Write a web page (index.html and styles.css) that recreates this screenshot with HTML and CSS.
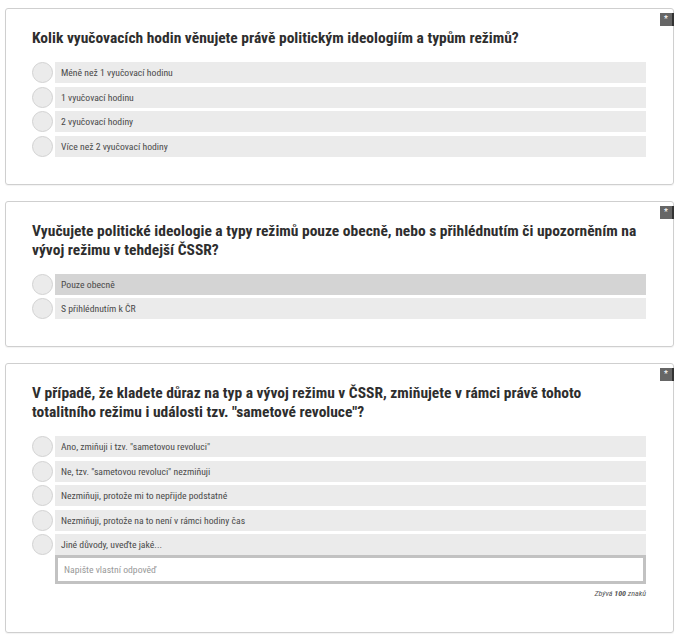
FILE: index.html
```html
<!DOCTYPE html>
<html lang="cs">
<head>
    <meta charset="UTF-8">
    <title>Dotazník</title>
    <link rel="stylesheet" href="styles.css">
</head>
<body>
    <div class="question">
        <span class="required">*</span>
        <h2>Kolik vyučovacích hodin věnujete právě politickým ideologiím a typům režimů?</h2>
        <div class="answers">
            <label class="answer"><span class="radio"></span><span class="answer-text">Méně než 1 vyučovací hodinu</span></label>
            <label class="answer"><span class="radio"></span><span class="answer-text">1 vyučovací hodinu</span></label>
            <label class="answer"><span class="radio"></span><span class="answer-text">2 vyučovací hodiny</span></label>
            <label class="answer"><span class="radio"></span><span class="answer-text">Více než 2 vyučovací hodiny</span></label>
        </div>
    </div>

    <div class="question">
        <span class="required">*</span>
        <h2>Vyučujete politické ideologie a typy režimů pouze obecně, nebo s přihlédnutím či upozorněním na vývoj režimu v tehdejší ČSSR?</h2>
        <div class="answers">
            <label class="answer hover"><span class="radio"></span><span class="answer-text">Pouze obecně</span></label>
            <label class="answer"><span class="radio"></span><span class="answer-text">S přihlédnutím k ČR</span></label>
        </div>
    </div>

    <div class="question">
        <span class="required">*</span>
        <h2>V případě, že kladete důraz na typ a vývoj režimu v ČSSR, zmiňujete v rámci právě tohoto totalitního režimu i události tzv. "sametové revoluce"?</h2>
        <div class="answers">
            <label class="answer"><span class="radio"></span><span class="answer-text">Ano, zmiňuji i tzv. "sametovou revoluci"</span></label>
            <label class="answer"><span class="radio"></span><span class="answer-text">Ne, tzv. "sametovou revoluci" nezmiňuji</span></label>
            <label class="answer"><span class="radio"></span><span class="answer-text">Nezmiňuji, protože mi to nepřijde podstatné</span></label>
            <label class="answer"><span class="radio"></span><span class="answer-text">Nezmiňuji, protože na to není v rámci hodiny čas</span></label>
            <label class="answer"><span class="radio"></span><span class="answer-text">Jiné důvody, uveďte jaké...</span></label>
            <div class="other">
                <input type="text" class="other-input" placeholder="Napište vlastní odpověď">
                <div class="counter">Zbývá <b>100</b> znaků</div>
            </div>
        </div>
    </div>
</body>
</html>
```

FILE: styles.css
```css
* {
    box-sizing: border-box;
}

body {
    margin: 0;
    padding: 8px 8px 0 5px;
    background: #fff;
    font-family: 'Roboto Condensed', 'DejaVu Sans Condensed', sans-serif;
    color: #333;
}

.question {
    position: relative;
    width: 669px;
    margin-bottom: 16px;
    padding: 20px 27px 27px 26px;
    border: 1px solid #cfcfcf;
    border-radius: 3px;
    box-shadow: 0 1px 1px rgba(0, 0, 0, 0.05);
}

.required {
    position: absolute;
    top: 4px;
    right: -1px;
    width: 14px;
    height: 13px;
    background: #666;
    color: #fff;
    font-size: 9px;
    line-height: 13px;
    text-align: center;
    border-right: 2px solid #333;
}

h2 {
    margin: 0 0 14px;
    font-size: 15.5px;
    line-height: 19px;
    font-weight: bold;
    color: #2e2e2e;
}

.answers {
    display: flex;
    flex-direction: column;
    gap: 3.5px;
}

.answer {
    display: flex;
    align-items: center;
    gap: 2px;
}

.radio {
    flex: none;
    width: 21px;
    height: 21px;
    border: 1px solid #d2d2d2;
    border-radius: 50%;
    background: #ebebeb;
}

.answer-text {
    flex: 1;
    height: 21px;
    padding-left: 6px;
    background: #ebebeb;
    font-size: 9.7px;
    line-height: 21px;
    color: #4a4a4a;
}

.hover .answer-text {
    background: #d4d4d4;
}

.other {
    margin-left: 23px;
    margin-top: -4px;
}

.other-input {
    display: block;
    width: 100%;
    height: 29px;
    padding: 0 6px;
    border: 3px solid #c2c2c2;
    font-family: inherit;
    font-size: 9.7px;
    color: #444;
    outline: none;
}

.other-input::placeholder {
    color: #999;
}

.counter {
    margin: 5px 0 7px;
    text-align: right;
    font-size: 8px;
    font-style: italic;
    color: #555;
}
```
